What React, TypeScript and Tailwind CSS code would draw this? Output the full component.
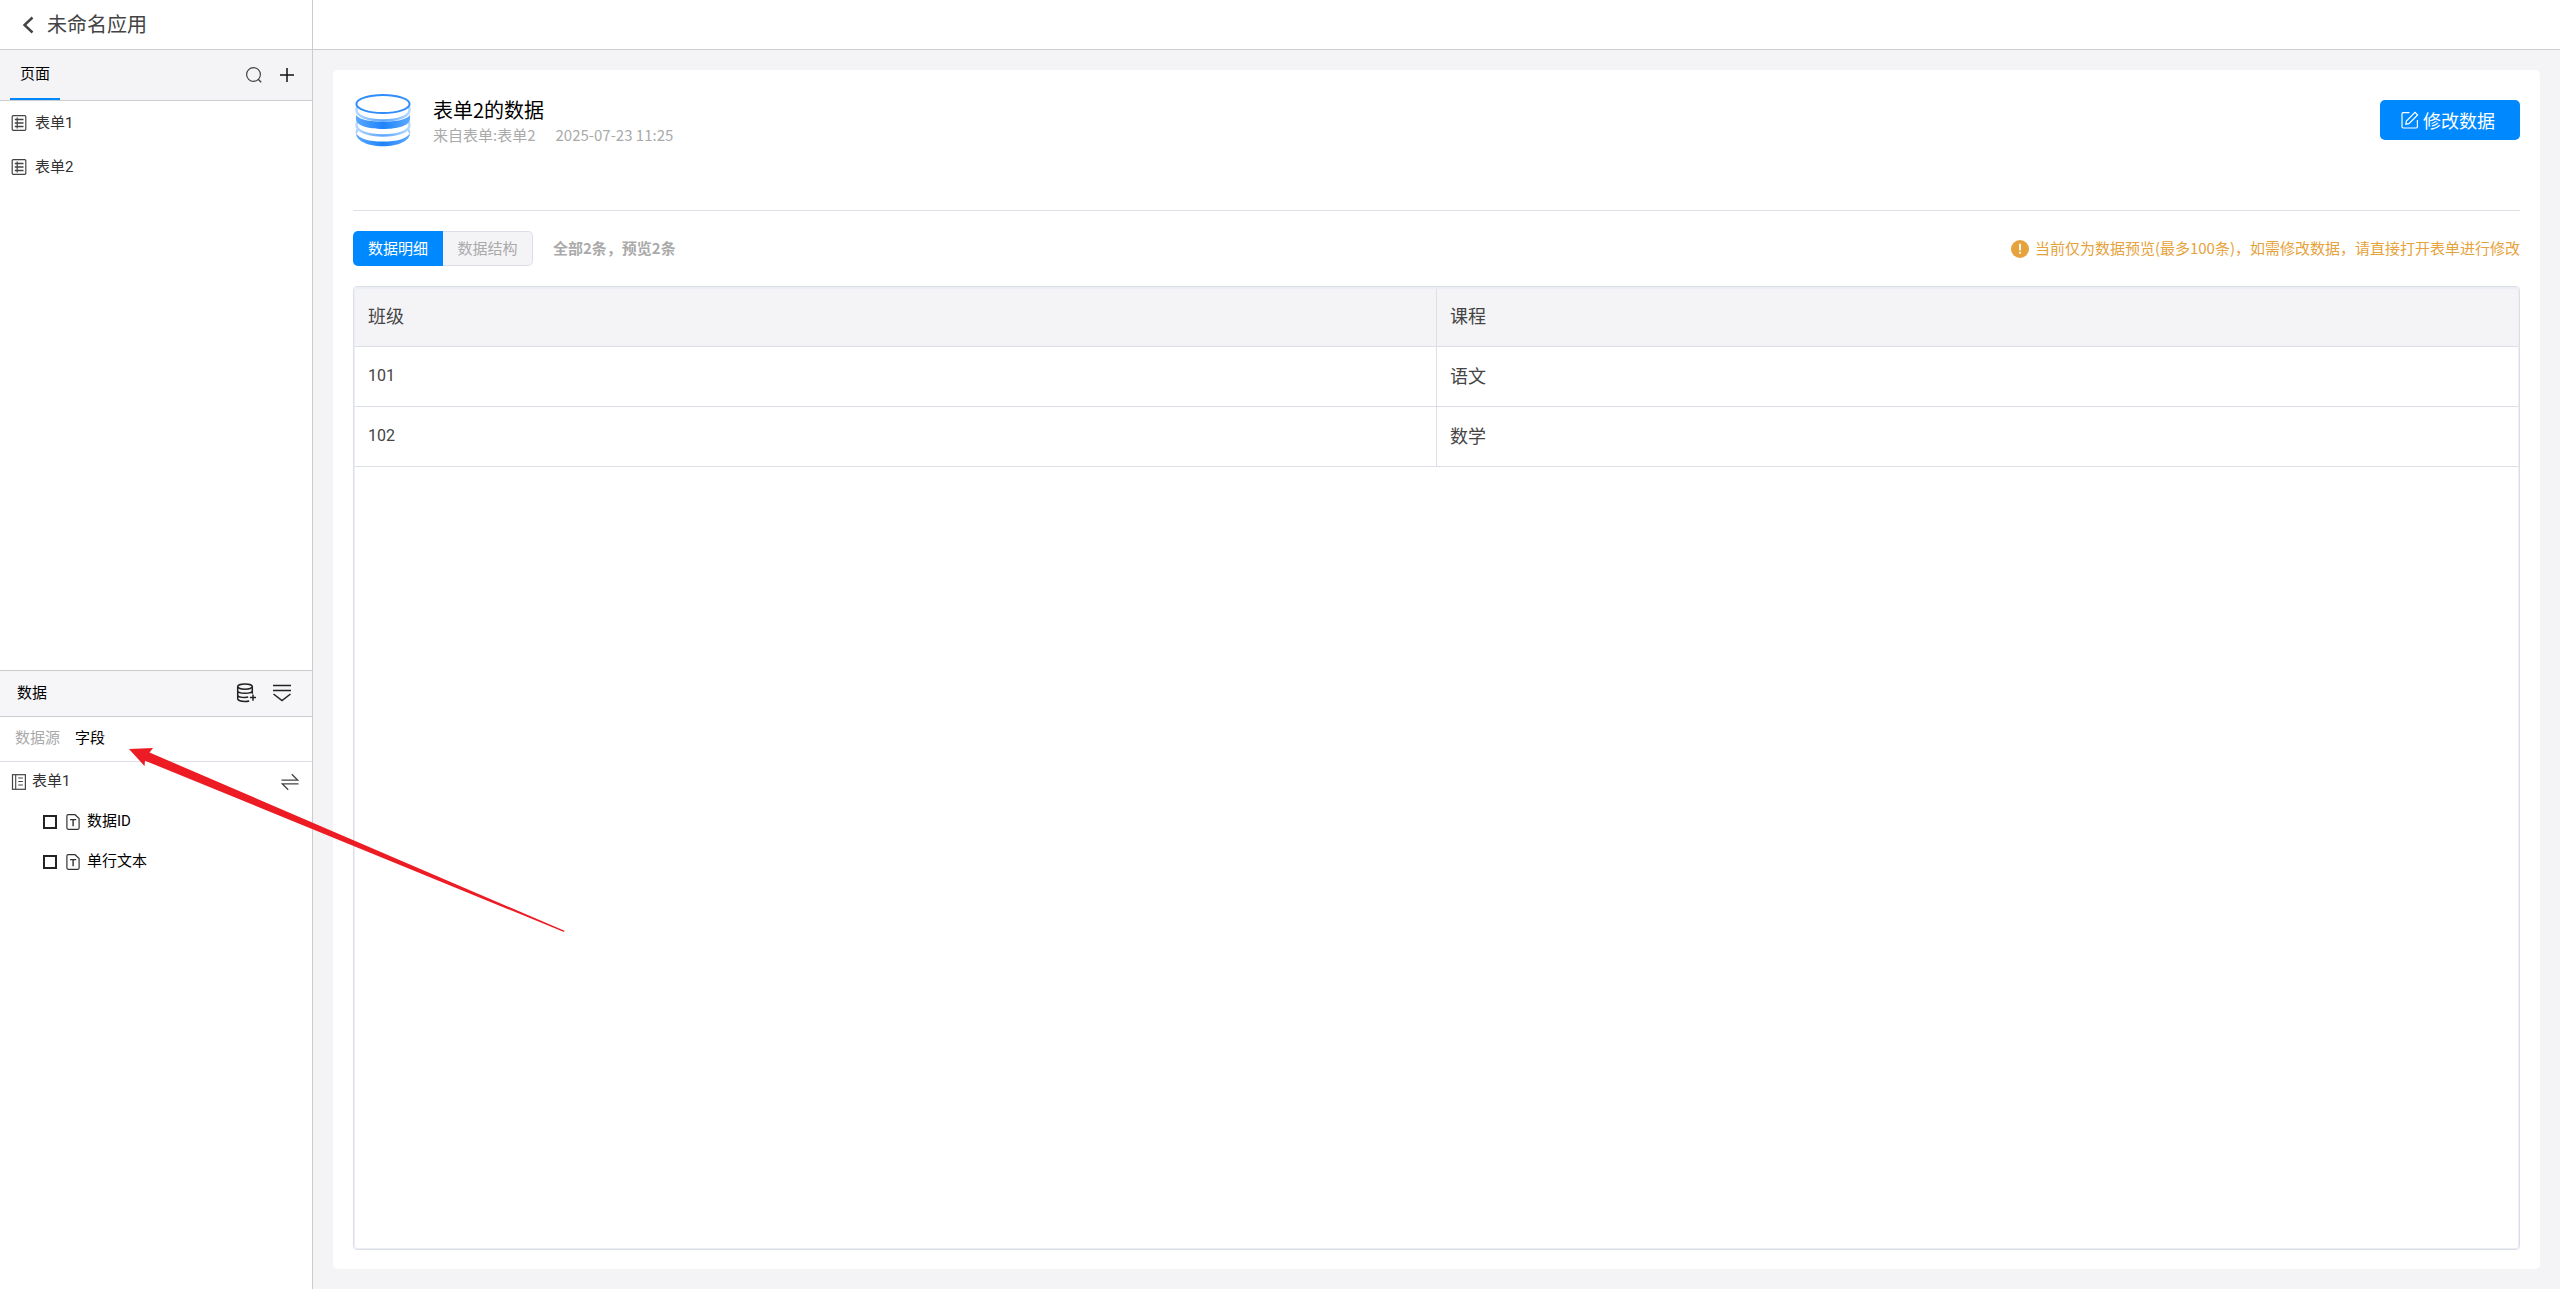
import { useState } from 'react';
import type { ReactNode } from 'react';

const pages = ['表单1', '表单2'];
const fields = ['数据ID', '单行文本'];
const columns = ['班级', '课程'];
const rows = [
  ['101', '语文'],
  ['102', '数学'],
];

interface IconProps {
  size: number;
  className?: string;
  children: ReactNode;
}

function Icon({ size, className, children }: IconProps) {
  return (
    <svg
      width={size}
      height={size}
      viewBox={`0 0 ${size} ${size}`}
      fill="none"
      stroke="currentColor"
      strokeWidth="1.2"
      className={className}
      aria-hidden="true"
    >
      {children}
    </svg>
  );
}

function BackIcon() {
  return (
    <Icon size={18} className="text-[#444]">
      <path d="M13.5 1.5 5.5 9l8 7.5" strokeWidth="2.4" />
    </Icon>
  );
}

function SearchIcon() {
  return (
    <Icon size={16} className="text-[#444]">
      <circle cx="7.5" cy="7.5" r="6.9" />
      <path d="m12.2 12.2 3 3" strokeWidth="1.4" />
    </Icon>
  );
}

function PlusIcon() {
  return (
    <Icon size={14} className="text-[#111]">
      <path d="M7 0v14M0 7h14" strokeWidth="1.5" />
    </Icon>
  );
}

function PageIcon() {
  return (
    <Icon size={16} className="text-[#444]">
      <rect x="1.2" y=".7" width="13.6" height="14.6" rx="1" />
      <path d="M6.2 2.5v11" strokeWidth="1.2" />
      <path d="M3.800 4.500h8.700M3.800 8h8.700M3.800 11.500h8.700" strokeWidth="1.300" />
    </Icon>
  );
}

function DatabaseAddIcon() {
  return (
    <Icon size={20} className="text-[#222]">
      <ellipse cx="9" cy="3.6" rx="7.3" ry="2.6" strokeWidth="1.5" />
      <path
        d="M1.7 3.6v12.2c0 1.4 3.3 2.6 7.3 2.6 1.6 0 3-.2 4.2-.5M16.3 3.6v7.2M1.7 7.8c0 1.4 3.3 2.5 7.3 2.5s7.3-1.1 7.3-2.5M1.7 11.9c0 1.4 3.3 2.5 7.3 2.5 1.2 0 2.2-.1 3.2-.3"
        strokeWidth="1.5"
      />
      <path d="M17 11.5v6.2M13.9 14.6H20" strokeWidth="1.5" />
    </Icon>
  );
}

function CollapseIcon() {
  return (
    <Icon size={20} className="text-[#222]">
      <path d="M1 2.5h18M1 7.5h18" strokeWidth="1.5" />
      <path d="m1.5 11 8.5 6.500L18.500 11" strokeWidth="1.5" />
    </Icon>
  );
}

function SourceIcon() {
  return (
    <Icon size={16} className="text-[#444]">
      <rect x="1.5" y=".7" width="12.9" height="14.6" />
      <path d="M4.7.7v14.6M7.3 4h4.6M7.3 7.5h4.6M7.3 11h4.6" strokeWidth="1.1" />
    </Icon>
  );
}

function SwapIcon() {
  return (
    <Icon size={18} className="text-[#444]">
      <path d="M.5 7.2h16.3l-6-6M17.5 10.8H1.2l6 6" strokeWidth="1.3" />
    </Icon>
  );
}

function TextFieldIcon() {
  return (
    <Icon size={16} className="text-[#333]">
      <path d="M10 .7H3.2c-.8 0-1.3.5-1.3 1.2v12.200c0 .7.5 1.2 1.3 1.2h9.7c.7 0 1.2-.5 1.2-1.200V4.500z" />
      <path d="M5 5.600h6.200M8.100 5.600v6.600" strokeWidth="1.4" />
    </Icon>
  );
}

function EditIcon() {
  return (
    <Icon size={18}>
      <path d="M8.5 1.6H2.2c-.7 0-1.2.5-1.2 1.2v13c0 .7.5 1.2 1.2 1.2h13c.7 0 1.2-.5 1.2-1.2V9" />
      <path d="m4.8 13.2.6-3.2L14 1.400 16.600 4 8 12.600z" />
    </Icon>
  );
}

function WarningIcon() {
  return (
    <svg width="18" height="18" viewBox="0 0 18 18" aria-hidden="true">
      <circle cx="9" cy="9" r="9" fill="#e6a23c" />
      <path d="M9 4.5v5.3" stroke="#fff" strokeWidth="1.8" strokeLinecap="round" />
      <circle cx="9" cy="12.8" r="1.1" fill="#fff" />
    </svg>
  );
}

function DatasetLogo() {
  return (
    <svg width="60" height="60" viewBox="0 0 60 60" fill="none" aria-hidden="true">
      <defs>
        <linearGradient id="layer" x1="0" x2="1">
          <stop offset="0" stopColor="#5aa9ff" />
          <stop offset=".5" stopColor="#1f83fb" />
          <stop offset="1" stopColor="#5aa9ff" />
        </linearGradient>
        <linearGradient id="pale" x1="0" x2="1">
          <stop offset="0" stopColor="#b5d7ff" />
          <stop offset=".5" stopColor="#5aa6ff" />
          <stop offset="1" stopColor="#b5d7ff" />
        </linearGradient>
      </defs>
      <path d="M3.5 43c0-1.500.5-3 1.500-4M56.500 43c0-1.500-.5-3-1.500-4" stroke="#a5cfff" strokeWidth="2" />
      <path d="M3 43c3 6 13 8.500 27 8.500S54 49 57 43c0 8-12 13.200-27 13.200S3 51 3 43z" fill="url(#layer)" />
      <path
        d="M3.500 35c0 6.500 12 10.500 26.500 10.500S56.500 41.500 56.500 35c0-1.500-.5-3-1.500-4M3.500 35c0-1.500.5-3 1.500-4"
        stroke="url(#pale)"
        strokeWidth="2.4"
      />
      <path d="M3 25c4 5 14 6.500 27 6.500S53 30 57 25v4c0 6.500-12 10-27 10S3 35.500 3 29z" fill="url(#layer)" />
      <path
        d="M3.500 20c0 6.500 12 10.500 26.500 10.500S56.500 26.500 56.500 20c0-1.500-.3-3-.8-4M3.500 20c0-1.500.3-3 .8-4"
        stroke="url(#pale)"
        strokeWidth="2.4"
      />
      <ellipse cx="30" cy="14" rx="26.6" ry="9" fill="#fff" stroke="#2f8cfd" strokeWidth="2" />
    </svg>
  );
}

function PagePanel() {
  return (
    <section className="flex min-h-0 flex-col">
      <div className="flex h-[51px] shrink-0 items-stretch justify-between border-b border-[#ccc] bg-[#f4f4f7] pr-[18px] pl-2.5">
        <button type="button" className="w-[50px] border-b-2 border-[#0089ff] text-[15px] text-black">
          页面
        </button>
        <div className="flex items-center gap-[18px]">
          <button type="button" aria-label="搜索">
            <SearchIcon />
          </button>
          <button type="button" aria-label="新增页面">
            <PlusIcon />
          </button>
        </div>
      </div>
      <ul className="text-[15px] text-[#333]">
        {pages.map((page) => (
          <li key={page}>
            <a href="#" className="flex h-11 items-center gap-2 pl-[11px]">
              <PageIcon />
              {page}
            </a>
          </li>
        ))}
      </ul>
    </section>
  );
}

function DataPanel() {
  return (
    <section className="flex min-h-0 flex-col border-t border-[#ccc] text-[15px]">
      <div className="flex h-[46px] shrink-0 items-center justify-between border-b border-[#ccc] bg-[#f6f6f8] pr-5 pl-[17px]">
        <h2 className="text-black">数据</h2>
        <div className="flex items-center gap-4">
          <button type="button" aria-label="添加数据源">
            <DatabaseAddIcon />
          </button>
          <button type="button" aria-label="收起">
            <CollapseIcon />
          </button>
        </div>
      </div>
      <div className="flex h-[45px] shrink-0 items-center gap-[15px] border-b border-[#dcdfe6] pl-[15px]">
        <button type="button" className="text-[#aaa]">
          数据源
        </button>
        <button type="button" className="text-black">
          字段
        </button>
      </div>
      <div className="flex h-10 items-center justify-between pr-[13px] pl-[11px] text-[#333]">
        <span className="flex items-center gap-[5px]">
          <SourceIcon />
          表单1
        </span>
        <button type="button" aria-label="切换">
          <SwapIcon />
        </button>
      </div>
      {fields.map((field) => (
        <label key={field} className="flex h-10 items-center pl-[43px] text-black">
          <input type="checkbox" className="mr-2 size-3.5 appearance-none border-2 border-[#222] bg-white" />
          <TextFieldIcon />
          <span className="ml-1.5">{field}</span>
        </label>
      ))}
    </section>
  );
}

function DataTable() {
  return (
    <div className="min-h-0 flex-1 rounded-[4px] border border-[#dcdfe6]">
      <div className="h-full rounded-[3px] border border-t-2 border-[#ebeef5]">
        <table className="w-full table-fixed border-collapse text-left text-lg text-[#444]">
          <thead className="bg-[#f4f4f7]">
            <tr className="h-[57px] border-b border-[#dcdfe6]">
              {columns.map((column) => (
                <th key={column} className="border-r border-[#dcdfe6] px-[13px] pb-1 font-normal last:border-r-0">
                  {column}
                </th>
              ))}
            </tr>
          </thead>
          <tbody>
            {rows.map(([grade, course]) => (
              <tr key={grade} className="h-[60px] border-b border-[#dcdfe6]">
                <td className="border-r border-[#dcdfe6] px-[13px] font-['Roboto',sans-serif] text-base">{grade}</td>
                <td className="px-[13px] pb-0.5">{course}</td>
              </tr>
            ))}
          </tbody>
        </table>
      </div>
    </div>
  );
}

function DataPreview() {
  const [tab, setTab] = useState('detail');

  return (
    <article className="flex min-h-0 flex-1 flex-col rounded-[5px] bg-white px-5 pt-5 pb-[19px] font-['Noto_Sans_CJK_SC',sans-serif]">
      <header className="flex h-[121px] shrink-0 items-start border-b border-[#dcdfe6]">
        <DatasetLogo />
        <div className="ml-5 pt-1.5">
          <h1 className="text-xl/7 text-black">表单2的数据</h1>
          <p className="flex gap-5 text-[15px]/[22px] text-[#aaa]">
            <span>来自表单:表单2</span>
            <time>2025-07-23 11:25</time>
          </p>
        </div>
        <button
          type="button"
          className="mt-2.5 ml-auto flex h-10 w-[140px] items-center justify-center gap-1 rounded-[5px] bg-[#0089ff] pr-1 text-lg text-white"
        >
          <EditIcon />
          修改数据
        </button>
      </header>

      <div className="my-5 flex h-[35px] shrink-0 items-center text-[15px]">
        <div className="flex h-full">
          <button
            type="button"
            onClick={() => setTab('detail')}
            className={
              tab === 'detail'
                ? 'w-[90px] rounded-l-[5px] bg-[#0089ff] text-white'
                : 'w-[90px] rounded-l-[5px] border border-r-0 border-[#dcdfe6] bg-[#f4f4f7] text-[#aaa]'
            }
          >
            数据明细
          </button>
          <button
            type="button"
            onClick={() => setTab('structure')}
            className={
              tab === 'structure'
                ? 'w-[90px] rounded-r-[5px] bg-[#0089ff] text-white'
                : 'w-[90px] rounded-r-[5px] border border-l-0 border-[#dcdfe6] bg-[#f4f4f7] text-[#aaa]'
            }
          >
            数据结构
          </button>
        </div>
        <strong className="ml-5 font-bold text-[#aaa]">全部2条，预览2条</strong>
        <p className="ml-auto flex items-center gap-1.5 text-[#e6a23c]">
          <WarningIcon />
          当前仅为数据预览(最多100条)，如需修改数据，请直接打开表单进行修改
        </p>
      </div>

      <DataTable />
    </article>
  );
}

function PointerArrow() {
  return (
    <svg
      width="436"
      height="184"
      viewBox="0 0 436 184"
      className="pointer-events-none absolute top-[748px] left-[129px]"
      aria-hidden="true"
    >
      <path d="M0 1 24 0 20.5 4.5 435.5 182.8 435 184 16 12.7 15.5 18z" fill="#ed1c24" />
    </svg>
  );
}

export default function App() {
  return (
    <div className="relative flex h-screen flex-col overflow-hidden bg-[#f4f4f7] font-['Roboto','Noto_Sans_CJK_SC',sans-serif]">
      <div className="flex h-[50px] shrink-0 border-b border-[#ccc] bg-white">
        <div className="flex w-[313px] items-center border-r border-[#ccc] pl-[19px] text-xl text-[#444]">
          <button type="button" aria-label="返回" className="mr-2.5">
            <BackIcon />
          </button>
          未命名应用
        </div>
      </div>
      <div className="flex min-h-0 flex-1">
        <aside className="grid w-[313px] shrink-0 grid-rows-2 border-r border-[#ccc] bg-white">
          <PagePanel />
          <DataPanel />
        </aside>
        <main className="flex min-w-0 flex-1 flex-col p-5">
          <DataPreview />
        </main>
      </div>
      <PointerArrow />
    </div>
  );
}
